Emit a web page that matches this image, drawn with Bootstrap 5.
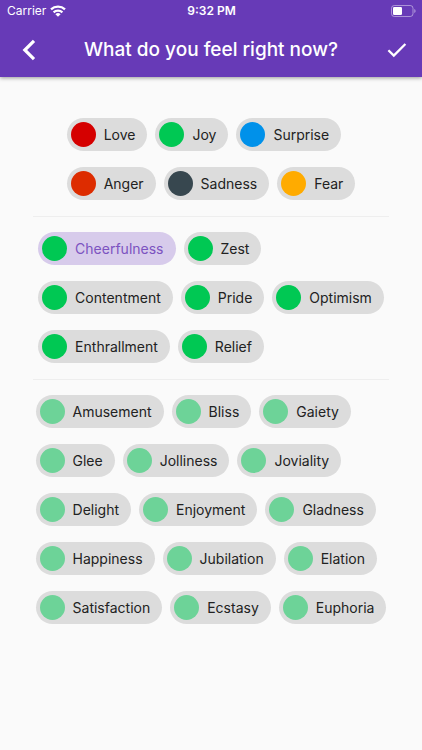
<!DOCTYPE html>
<html lang="en">
<head>
<meta charset="utf-8">
<meta name="viewport" content="width=device-width, initial-scale=1">
<title>What do you feel right now?</title>
<link href="https://cdn.jsdelivr.net/npm/bootstrap@5.3.0/dist/css/bootstrap.min.css" rel="stylesheet">
<style>
  body { background: #fafafa; font-family: Inter, "Liberation Sans", sans-serif; color: #222; }
  .app-header { background: #673ab7; box-shadow: 0 1px 4px rgba(0, 0, 0, .4); }
  .status-bar { height: 22px; font-size: 12px; line-height: 22px; padding: 0 6px 0 7px; }
  .status-time { font-weight: 600; }
  .title-bar { height: 55px; padding: 0 12px; }
  .title-bar h1 { font-size: 19px; line-height: 24px; font-weight: 500; }
  .icon-btn { width: 26px; height: 32px; }
  .feelings { padding: 41px 33px 0; }
  .feelings hr { margin: 16px 0 15px; border-color: #eee; opacity: 1; }
  .chip-group { width: fit-content; row-gap: 16px; }
  .chip { height: 33px; gap: 8px; padding: 0 12px 0 4px; background: #dcdcdc; color: #222; font-size: 14px; line-height: 20px; white-space: nowrap; }
  .chip::before { content: ""; width: 25px; height: 25px; border-radius: 50%; background: var(--dot); }
  .chip.selected { background: #d7cbeb; color: #7c53c1; }
  .joy { --dot: #00c853; }
  .joy-soft { --dot: #6dd398; }
  .love { --dot: #d50000; }
  .surprise { --dot: #0091ea; }
  .anger { --dot: #dd2c00; }
  .sadness { --dot: #37474f; }
  .fear { --dot: #ffab00; }
</style>
<script src="https://cdn.jsdelivr.net/npm/bootstrap@5.3.0/dist/js/bootstrap.bundle.min.js" defer></script>
</head>
<body>
<header class="app-header text-white">
  <div class="status-bar d-flex align-items-center">
    <div class="col d-flex align-items-center gap-1">
      <span>Carrier</span>
      <svg width="16" height="12" viewBox="0 0 16 12" fill="none" stroke="#fff" stroke-width="2.3" aria-hidden="true">
        <path d="M1 4.4a10.2 10.2 0 0 1 14 0M3.6 7.3a6.4 6.4 0 0 1 8.8 0"/>
        <path d="M8 11.8 5.4 9.2a3.7 3.7 0 0 1 5.2 0z" fill="#fff" stroke="none"/>
      </svg>
    </div>
    <div class="status-time">9:32 PM</div>
    <div class="col d-flex justify-content-end">
      <svg width="25" height="12" viewBox="0 0 25 12" aria-hidden="true">
        <rect x=".5" y=".5" width="21.5" height="11" rx="2.8" fill="none" stroke="#fff" stroke-opacity=".45"/>
        <rect x="2" y="2" width="9" height="8" rx="1.2" fill="#fff"/>
        <path d="M23.3 4v4q1.3-.6 1.3-2t-1.3-2z" fill="#fff" fill-opacity=".5"/>
      </svg>
    </div>
  </div>
  <div class="title-bar d-flex align-items-center justify-content-between">
    <button type="button" class="icon-btn btn border-0 p-0 d-flex align-items-center justify-content-end" aria-label="Back">
      <svg width="18" height="22" viewBox="-2 0 18 22" fill="none" stroke="#fff" stroke-width="3.2"><path d="M12 1.8 2.8 11l9.2 9.2"/></svg>
    </button>
    <h1 class="m-0">What do you feel right now?</h1>
    <button type="button" class="icon-btn btn border-0 p-0 d-flex align-items-center justify-content-center" aria-label="Done">
      <svg width="20" height="16" viewBox="0 0 20 16" fill="none" stroke="#fff" stroke-width="2.3"><path d="M1.4 8.3 6.8 13.6 18.4 2"/></svg>
    </button>
  </div>
</header>
<main class="feelings">
  <div class="chip-group d-flex flex-column mx-auto">
    <div class="d-flex gap-2">
      <button type="button" class="chip love d-flex align-items-center border-0 rounded-pill">Love</button>
      <button type="button" class="chip joy d-flex align-items-center border-0 rounded-pill">Joy</button>
      <button type="button" class="chip surprise d-flex align-items-center border-0 rounded-pill">Surprise</button>
    </div>
    <div class="d-flex gap-2">
      <button type="button" class="chip anger d-flex align-items-center border-0 rounded-pill">Anger</button>
      <button type="button" class="chip sadness d-flex align-items-center border-0 rounded-pill">Sadness</button>
      <button type="button" class="chip fear d-flex align-items-center border-0 rounded-pill">Fear</button>
    </div>
  </div>
  <hr>
  <div class="chip-group d-flex flex-column mx-auto">
    <div class="d-flex gap-2">
      <button type="button" class="chip joy selected d-flex align-items-center border-0 rounded-pill" aria-pressed="true">Cheerfulness</button>
      <button type="button" class="chip joy d-flex align-items-center border-0 rounded-pill">Zest</button>
    </div>
    <div class="d-flex gap-2">
      <button type="button" class="chip joy d-flex align-items-center border-0 rounded-pill">Contentment</button>
      <button type="button" class="chip joy d-flex align-items-center border-0 rounded-pill">Pride</button>
      <button type="button" class="chip joy d-flex align-items-center border-0 rounded-pill">Optimism</button>
    </div>
    <div class="d-flex gap-2">
      <button type="button" class="chip joy d-flex align-items-center border-0 rounded-pill">Enthrallment</button>
      <button type="button" class="chip joy d-flex align-items-center border-0 rounded-pill">Relief</button>
    </div>
  </div>
  <hr>
  <div class="chip-group d-flex flex-column mx-auto">
    <div class="d-flex gap-2">
      <button type="button" class="chip joy-soft d-flex align-items-center border-0 rounded-pill">Amusement</button>
      <button type="button" class="chip joy-soft d-flex align-items-center border-0 rounded-pill">Bliss</button>
      <button type="button" class="chip joy-soft d-flex align-items-center border-0 rounded-pill">Gaiety</button>
    </div>
    <div class="d-flex gap-2">
      <button type="button" class="chip joy-soft d-flex align-items-center border-0 rounded-pill">Glee</button>
      <button type="button" class="chip joy-soft d-flex align-items-center border-0 rounded-pill">Jolliness</button>
      <button type="button" class="chip joy-soft d-flex align-items-center border-0 rounded-pill">Joviality</button>
    </div>
    <div class="d-flex gap-2">
      <button type="button" class="chip joy-soft d-flex align-items-center border-0 rounded-pill">Delight</button>
      <button type="button" class="chip joy-soft d-flex align-items-center border-0 rounded-pill">Enjoyment</button>
      <button type="button" class="chip joy-soft d-flex align-items-center border-0 rounded-pill">Gladness</button>
    </div>
    <div class="d-flex gap-2">
      <button type="button" class="chip joy-soft d-flex align-items-center border-0 rounded-pill">Happiness</button>
      <button type="button" class="chip joy-soft d-flex align-items-center border-0 rounded-pill">Jubilation</button>
      <button type="button" class="chip joy-soft d-flex align-items-center border-0 rounded-pill">Elation</button>
    </div>
    <div class="d-flex gap-2">
      <button type="button" class="chip joy-soft d-flex align-items-center border-0 rounded-pill">Satisfaction</button>
      <button type="button" class="chip joy-soft d-flex align-items-center border-0 rounded-pill">Ecstasy</button>
      <button type="button" class="chip joy-soft d-flex align-items-center border-0 rounded-pill">Euphoria</button>
    </div>
  </div>
</main>
</body>
</html>
